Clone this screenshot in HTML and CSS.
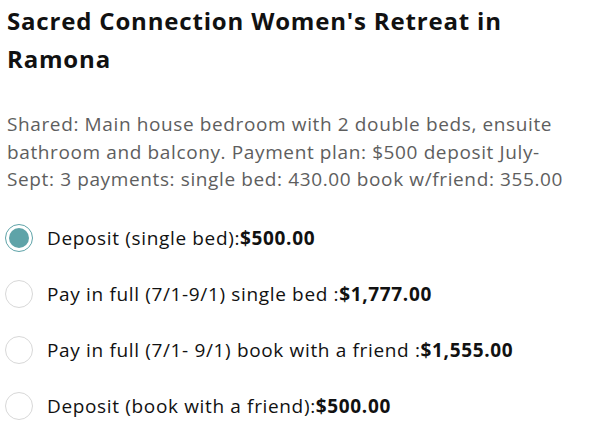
FILE: index.html
```html
<!DOCTYPE html>
<html lang="en">
<head>
    <meta charset="UTF-8">
    <meta name="viewport" content="width=device-width, initial-scale=1.0">
    <title>Sacred Connection Women's Retreat in Ramona</title>
    <link rel="stylesheet" href="styles.css">
</head>
<body>

    <!-- Product Title -->
    <h1 class="title">Sacred Connection Women's Retreat in Ramona</h1>

    <!-- Description -->
    <p class="desc">Shared: Main house bedroom with 2 double beds, ensuite bathroom and balcony. Payment plan: $500 deposit July-Sept: 3 payments: single bed: 430.00 book w/friend: 355.00</p>

    <!-- Payment Options -->
    <div class="options">
        <label class="option">
            <input type="radio" name="plan" checked>
            <span class="dot"></span>
            <span class="text">Deposit (single bed):<b>$500.00</b></span>
        </label>
        <label class="option">
            <input type="radio" name="plan">
            <span class="dot"></span>
            <span class="text">Pay in full (7/1-9/1) single bed :<b>$1,777.00</b></span>
        </label>
        <label class="option">
            <input type="radio" name="plan">
            <span class="dot"></span>
            <span class="text">Pay in full (7/1- 9/1) book with a friend :<b>$1,555.00</b></span>
        </label>
        <label class="option">
            <input type="radio" name="plan">
            <span class="dot"></span>
            <span class="text">Deposit (book with a friend):<b>$500.00</b></span>
        </label>
    </div>

</body>
</html>
```

FILE: styles.css
```css
/* General Styles */
body {
    font-family: 'Open Sans', 'Noto Sans', sans-serif;
    background-color: #fff;
    color: #111;
    margin: 0;
    padding: 0 17px 0 7px;
}

.title {
    font-size: 24px;
    line-height: 38px;
    font-weight: 700;
    letter-spacing: 0.82px;
    margin: 0;
    padding-top: 2px;
    color: #111;
}

.desc {
    font-size: 19px;
    line-height: 27.5px;
    letter-spacing: 0.62px;
    color: #5e5e5e;
    margin: 33px 0 0;
}

/* Radio Options */
.options {
    margin-top: 30px;
    display: flex;
    flex-direction: column;
    gap: 28px;
}

.option {
    display: flex;
    align-items: center;
    gap: 14px;
    font-size: 19px;
    line-height: 28px;
    letter-spacing: 0.65px;
    cursor: pointer;
}

.option input {
    display: none;
}

.dot {
    width: 26px;
    height: 26px;
    border: 1px solid #d8d8d8;
    border-radius: 50%;
    margin-left: -2px;
    display: flex;
    align-items: center;
    justify-content: center;
    flex-shrink: 0;
}

.option input:checked + .dot {
    border-color: #5ea3a8;
}

.option input:checked + .dot::after {
    content: "";
    width: 20px;
    height: 20px;
    border-radius: 50%;
    background-color: #5ea3a8;
}

.text b {
    font-weight: 700;
}
```
